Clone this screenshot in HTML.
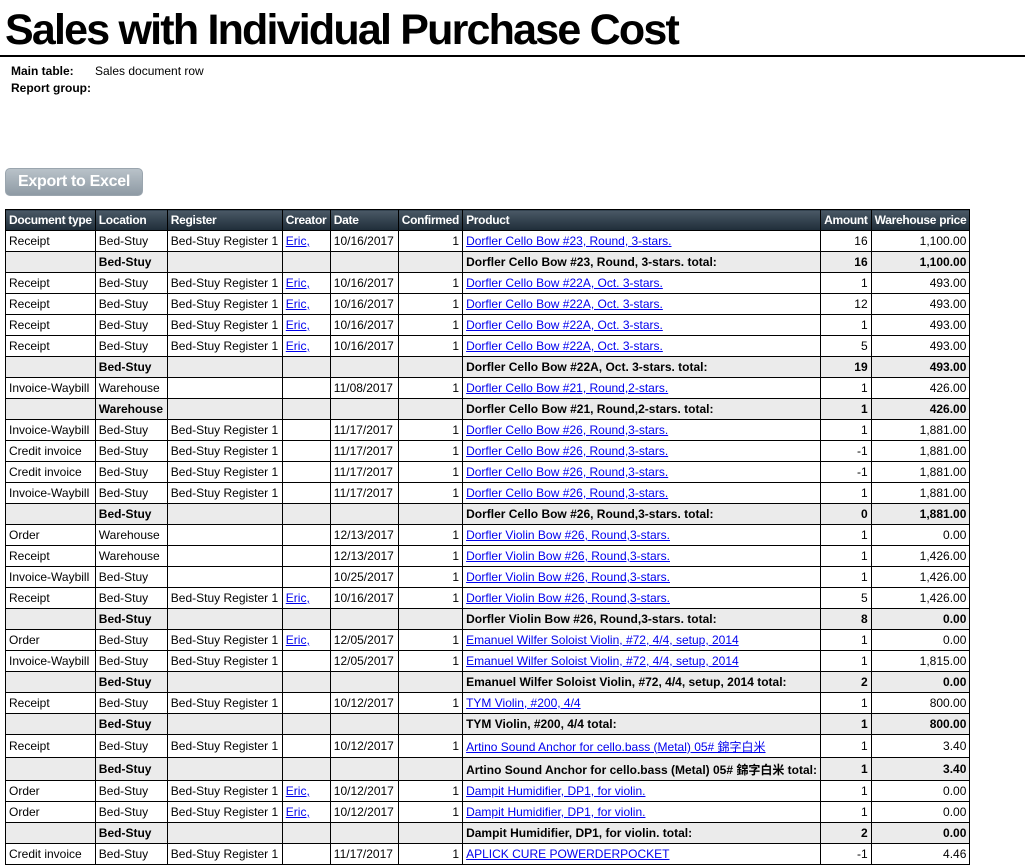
<!DOCTYPE html>
<html><head><meta charset="utf-8"><style>
body{margin:0;background:#fff;font-family:"Liberation Sans","Noto Sans CJK SC",sans-serif;color:#000;}
h1{position:absolute;left:5px;top:6px;margin:0;font-size:43px;letter-spacing:-1.8px;font-weight:bold;line-height:48px;white-space:nowrap;}
.rule{position:absolute;left:0;top:55px;width:1025px;height:2px;background:#000;}
.meta{position:absolute;left:11px;top:63px;font-size:12px;line-height:17px;}
.meta b{display:inline-block;width:84px;}
.btn{position:absolute;left:5px;top:168px;width:138px;height:28px;border-radius:5px;background:linear-gradient(#b9c2c9,#8e9aa4);border:1px solid #9aa5ae;box-sizing:border-box;color:#fff;font-weight:bold;font-size:16px;line-height:26px;text-align:center;letter-spacing:-0.3px;}
table{position:absolute;left:5px;top:209px;border-collapse:collapse;table-layout:fixed;font-size:12px;}
td,th{border:1px solid #000;padding:0 3px;height:20px;white-space:nowrap;overflow:hidden;text-align:left;}
th{background:linear-gradient(#4a5966,#1f2d39);color:#fff;font-weight:bold;letter-spacing:-0.3px;}
td.r,th.r{text-align:right;}
tr.t td{background:#ebebeb;font-weight:bold;}
tr.c td{height:22px;}
a{color:#00e;text-decoration:underline;}
</style></head><body>
<h1>Sales with Individual Purchase Cost</h1>
<div class="rule"></div>
<div class="meta"><b>Main table:</b>Sales document row<br><b>Report group:</b></div>
<div class="btn">Export to Excel</div>
<table>
<colgroup><col style="width:86px"><col style="width:72px"><col style="width:115px"><col style="width:48px"><col style="width:68px"><col style="width:62px"><col style="width:358px"><col style="width:49px"><col style="width:97px"></colgroup>
<tr><th>Document type</th><th>Location</th><th>Register</th><th>Creator</th><th>Date</th><th>Confirmed</th><th>Product</th><th class="r">Amount</th><th class="r">Warehouse price</th></tr>
<tr><td>Receipt</td><td>Bed-Stuy</td><td>Bed-Stuy Register 1</td><td><a>Eric,</a></td><td>10/16/2017</td><td class="r">1</td><td><a>Dorfler Cello Bow #23, Round, 3-stars.</a></td><td class="r">16</td><td class="r">1,100.00</td></tr>
<tr class="t"><td></td><td>Bed-Stuy</td><td></td><td></td><td></td><td></td><td>Dorfler Cello Bow #23, Round, 3-stars. total:</td><td class="r">16</td><td class="r">1,100.00</td></tr>
<tr><td>Receipt</td><td>Bed-Stuy</td><td>Bed-Stuy Register 1</td><td><a>Eric,</a></td><td>10/16/2017</td><td class="r">1</td><td><a>Dorfler Cello Bow #22A, Oct. 3-stars.</a></td><td class="r">1</td><td class="r">493.00</td></tr>
<tr><td>Receipt</td><td>Bed-Stuy</td><td>Bed-Stuy Register 1</td><td><a>Eric,</a></td><td>10/16/2017</td><td class="r">1</td><td><a>Dorfler Cello Bow #22A, Oct. 3-stars.</a></td><td class="r">12</td><td class="r">493.00</td></tr>
<tr><td>Receipt</td><td>Bed-Stuy</td><td>Bed-Stuy Register 1</td><td><a>Eric,</a></td><td>10/16/2017</td><td class="r">1</td><td><a>Dorfler Cello Bow #22A, Oct. 3-stars.</a></td><td class="r">1</td><td class="r">493.00</td></tr>
<tr><td>Receipt</td><td>Bed-Stuy</td><td>Bed-Stuy Register 1</td><td><a>Eric,</a></td><td>10/16/2017</td><td class="r">1</td><td><a>Dorfler Cello Bow #22A, Oct. 3-stars.</a></td><td class="r">5</td><td class="r">493.00</td></tr>
<tr class="t"><td></td><td>Bed-Stuy</td><td></td><td></td><td></td><td></td><td>Dorfler Cello Bow #22A, Oct. 3-stars. total:</td><td class="r">19</td><td class="r">493.00</td></tr>
<tr><td>Invoice-Waybill</td><td>Warehouse</td><td></td><td></td><td>11/08/2017</td><td class="r">1</td><td><a>Dorfler Cello Bow #21, Round,2-stars.</a></td><td class="r">1</td><td class="r">426.00</td></tr>
<tr class="t"><td></td><td>Warehouse</td><td></td><td></td><td></td><td></td><td>Dorfler Cello Bow #21, Round,2-stars. total:</td><td class="r">1</td><td class="r">426.00</td></tr>
<tr><td>Invoice-Waybill</td><td>Bed-Stuy</td><td>Bed-Stuy Register 1</td><td></td><td>11/17/2017</td><td class="r">1</td><td><a>Dorfler Cello Bow #26, Round,3-stars.</a></td><td class="r">1</td><td class="r">1,881.00</td></tr>
<tr><td>Credit invoice</td><td>Bed-Stuy</td><td>Bed-Stuy Register 1</td><td></td><td>11/17/2017</td><td class="r">1</td><td><a>Dorfler Cello Bow #26, Round,3-stars.</a></td><td class="r">-1</td><td class="r">1,881.00</td></tr>
<tr><td>Credit invoice</td><td>Bed-Stuy</td><td>Bed-Stuy Register 1</td><td></td><td>11/17/2017</td><td class="r">1</td><td><a>Dorfler Cello Bow #26, Round,3-stars.</a></td><td class="r">-1</td><td class="r">1,881.00</td></tr>
<tr><td>Invoice-Waybill</td><td>Bed-Stuy</td><td>Bed-Stuy Register 1</td><td></td><td>11/17/2017</td><td class="r">1</td><td><a>Dorfler Cello Bow #26, Round,3-stars.</a></td><td class="r">1</td><td class="r">1,881.00</td></tr>
<tr class="t"><td></td><td>Bed-Stuy</td><td></td><td></td><td></td><td></td><td>Dorfler Cello Bow #26, Round,3-stars. total:</td><td class="r">0</td><td class="r">1,881.00</td></tr>
<tr><td>Order</td><td>Warehouse</td><td></td><td></td><td>12/13/2017</td><td class="r">1</td><td><a>Dorfler Violin Bow #26, Round,3-stars.</a></td><td class="r">1</td><td class="r">0.00</td></tr>
<tr><td>Receipt</td><td>Warehouse</td><td></td><td></td><td>12/13/2017</td><td class="r">1</td><td><a>Dorfler Violin Bow #26, Round,3-stars.</a></td><td class="r">1</td><td class="r">1,426.00</td></tr>
<tr><td>Invoice-Waybill</td><td>Bed-Stuy</td><td></td><td></td><td>10/25/2017</td><td class="r">1</td><td><a>Dorfler Violin Bow #26, Round,3-stars.</a></td><td class="r">1</td><td class="r">1,426.00</td></tr>
<tr><td>Receipt</td><td>Bed-Stuy</td><td>Bed-Stuy Register 1</td><td><a>Eric,</a></td><td>10/16/2017</td><td class="r">1</td><td><a>Dorfler Violin Bow #26, Round,3-stars.</a></td><td class="r">5</td><td class="r">1,426.00</td></tr>
<tr class="t"><td></td><td>Bed-Stuy</td><td></td><td></td><td></td><td></td><td>Dorfler Violin Bow #26, Round,3-stars. total:</td><td class="r">8</td><td class="r">0.00</td></tr>
<tr><td>Order</td><td>Bed-Stuy</td><td>Bed-Stuy Register 1</td><td><a>Eric,</a></td><td>12/05/2017</td><td class="r">1</td><td><a>Emanuel Wilfer Soloist Violin, #72, 4/4, setup, 2014</a></td><td class="r">1</td><td class="r">0.00</td></tr>
<tr><td>Invoice-Waybill</td><td>Bed-Stuy</td><td>Bed-Stuy Register 1</td><td></td><td>12/05/2017</td><td class="r">1</td><td><a>Emanuel Wilfer Soloist Violin, #72, 4/4, setup, 2014</a></td><td class="r">1</td><td class="r">1,815.00</td></tr>
<tr class="t"><td></td><td>Bed-Stuy</td><td></td><td></td><td></td><td></td><td>Emanuel Wilfer Soloist Violin, #72, 4/4, setup, 2014 total:</td><td class="r">2</td><td class="r">0.00</td></tr>
<tr><td>Receipt</td><td>Bed-Stuy</td><td>Bed-Stuy Register 1</td><td></td><td>10/12/2017</td><td class="r">1</td><td><a>TYM Violin, #200, 4/4</a></td><td class="r">1</td><td class="r">800.00</td></tr>
<tr class="t"><td></td><td>Bed-Stuy</td><td></td><td></td><td></td><td></td><td>TYM Violin, #200, 4/4 total:</td><td class="r">1</td><td class="r">800.00</td></tr>
<tr class="c"><td>Receipt</td><td>Bed-Stuy</td><td>Bed-Stuy Register 1</td><td></td><td>10/12/2017</td><td class="r">1</td><td><a>Artino Sound Anchor for cello.bass (Metal) 05# 錦字白米</a></td><td class="r">1</td><td class="r">3.40</td></tr>
<tr class="t c"><td></td><td>Bed-Stuy</td><td></td><td></td><td></td><td></td><td>Artino Sound Anchor for cello.bass (Metal) 05# 錦字白米 total:</td><td class="r">1</td><td class="r">3.40</td></tr>
<tr><td>Order</td><td>Bed-Stuy</td><td>Bed-Stuy Register 1</td><td><a>Eric,</a></td><td>10/12/2017</td><td class="r">1</td><td><a>Dampit Humidifier, DP1, for violin.</a></td><td class="r">1</td><td class="r">0.00</td></tr>
<tr><td>Order</td><td>Bed-Stuy</td><td>Bed-Stuy Register 1</td><td><a>Eric,</a></td><td>10/12/2017</td><td class="r">1</td><td><a>Dampit Humidifier, DP1, for violin.</a></td><td class="r">1</td><td class="r">0.00</td></tr>
<tr class="t"><td></td><td>Bed-Stuy</td><td></td><td></td><td></td><td></td><td>Dampit Humidifier, DP1, for violin. total:</td><td class="r">2</td><td class="r">0.00</td></tr>
<tr><td>Credit invoice</td><td>Bed-Stuy</td><td>Bed-Stuy Register 1</td><td></td><td>11/17/2017</td><td class="r">1</td><td><a>APLICK CURE POWERDERPOCKET</a></td><td class="r">-1</td><td class="r">4.46</td></tr>
</table>
</body></html>
